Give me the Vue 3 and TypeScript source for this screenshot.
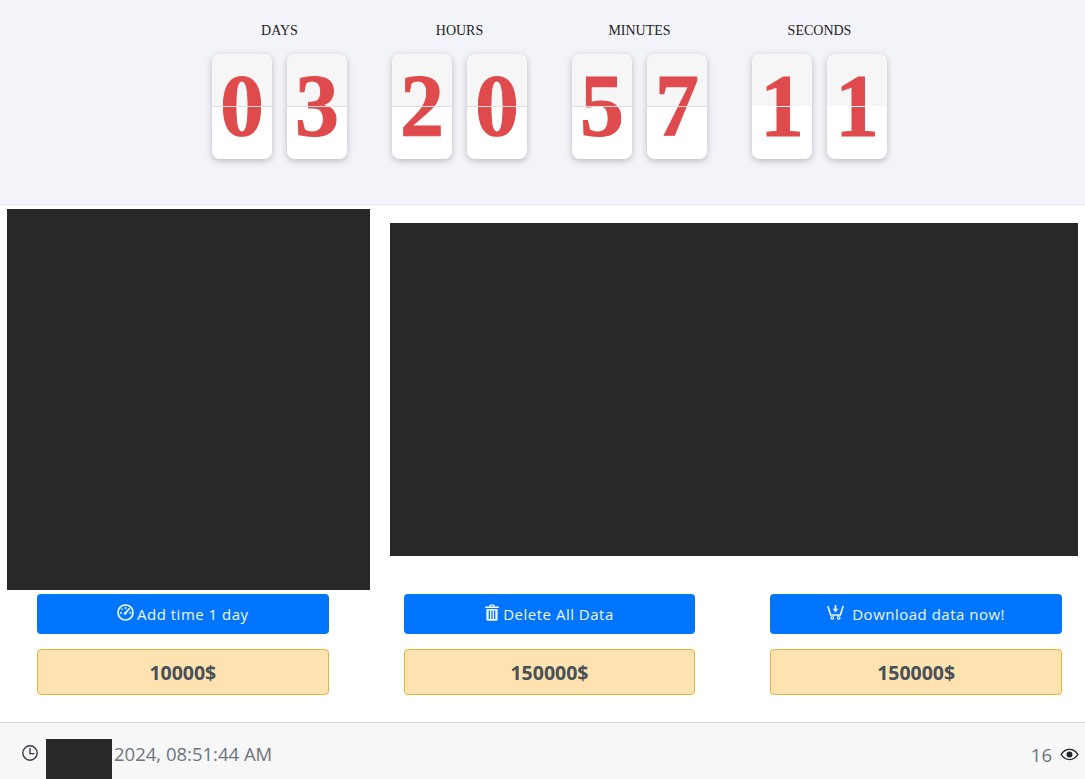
<script setup lang="ts">
interface Unit { label: string; digits: string[]; soft?: boolean }
const units: Unit[] = [
  { label: 'DAYS', digits: ['0', '3'] },
  { label: 'HOURS', digits: ['2', '0'] },
  { label: 'MINUTES', digits: ['5', '7'] },
  { label: 'SECONDS', digits: ['1', '1'], soft: true },
]
const offers = [
  { id: 'time', text: 'Add time 1 day', price: '10000$' },
  { id: 'trash', text: 'Delete All Data', price: '150000$' },
  { id: 'cart', text: 'Download data now!', price: '150000$' },
]
</script>

<template>
  <div class="page">
    <header class="timer">
      <div v-for="u in units" :key="u.label" class="unit">
        <div class="label">{{ u.label }}</div>
        <div class="cards">
          <div v-for="(d, i) in u.digits" :key="i" class="card" :class="{ soft: u.soft }">
            <span class="digit">{{ d }}</span>
          </div>
        </div>
      </div>
    </header>

    <main class="main">
      <div class="media">
        <div class="block left"></div>
        <div class="block right"></div>
      </div>
      <div class="offers">
        <div v-for="o in offers" :key="o.id" class="offer">
          <button class="btn" type="button">
            <svg v-if="o.id === 'time'" class="ico" viewBox="0 0 17 17" fill="none" stroke="currentColor">
              <circle cx="8.500" cy="8.500" r="7.500" stroke-width="1.700" />
              <path stroke-width="1.700" stroke-linecap="round" d="M8.500 3.600v.6M4.900 5v.1M3.600 8.800h.6M13 8.800h.5" />
              <path stroke-width="1.700" stroke-linecap="round" d="M8.300 9.300 12 4.900" />
              <circle cx="8.200" cy="9.400" r="1.400" fill="currentColor" stroke="none" />
            </svg>
            <svg v-else-if="o.id === 'trash'" class="ico trash" viewBox="0 0 14 17" fill="currentColor">
              <path d="M4.300 1.700A1.300 1.300 0 0 1 5.600.5h2.800a1.300 1.300 0 0 1 1.300 1.200V2.600h3.600a.7.7 0 0 1 0 1.500H.7a.7.7 0 0 1 0-1.500h3.600zM5.500 2.600h3V1.700h-3z" fill-rule="evenodd" />
              <path fill-rule="evenodd" d="M1.400 4.900h11.200v10.300a1.500 1.500 0 0 1-1.500 1.500H2.900a1.500 1.500 0 0 1-1.500-1.500V4.900zM3.700 6.600v8.300h1.300V6.600H3.700zm2.650 0v8.300h1.300V6.600H6.350zm2.650 0v8.300h1.300V6.600H9z" />
            </svg>
            <svg v-else class="ico cart" viewBox="0 0 17 15" fill="none" stroke="currentColor">
              <path stroke-width="1.600" stroke-linejoin="round" stroke-linecap="round" d="M1 1.500 3.600 10h9.800L16 1.500" />
              <path stroke-width="1.600" d="M8.500 0v5" />
              <path fill="currentColor" stroke="none" d="M5.700 3.800h5.600L8.500 7.600z" />
              <circle cx="5.300" cy="12.800" r="1.300" stroke-width="1.200" />
              <circle cx="11.700" cy="12.800" r="1.300" stroke-width="1.200" />
            </svg>
            <span class="btn-text" :class="{ wide: o.id === 'cart' }">{{ o.text }}</span>
          </button>
          <div class="price">{{ o.price }}</div>
        </div>
      </div>
    </main>

    <footer class="footer">
      <div class="when">
        <svg class="clock" viewBox="0 0 16 16" fill="none" stroke="currentColor" stroke-width="1.400">
          <circle cx="8" cy="8" r="7.200" />
          <path d="M8 3.500V8.600H12" stroke-linecap="round" />
        </svg>
        <span class="redact"></span>
        <span class="stamp">2024, 08:51:44 AM</span>
      </div>
      <div class="views">
        <span>16</span>
        <svg class="eye" viewBox="0 0 20 14" fill="none" stroke="currentColor">
          <path stroke-width="1.500" d="M1 7c2.300-3.700 5.300-5.500 9-5.500s6.700 1.800 9 5.500c-2.300 3.700-5.300 5.500-9 5.500S3.300 10.700 1 7z" />
          <circle cx="10" cy="7" r="3.200" fill="currentColor" stroke="none" />
        </svg>
      </div>
    </footer>
  </div>
</template>

<style scoped>
.page {
  width: 1085px;
  height: 779px;
  overflow: hidden;
  display: flex;
  flex-direction: column;
  background: #fff;
  font-family: "Open Sans", "Noto Sans", sans-serif;
}
.timer {
  box-sizing: border-box;
  height: 205px;
  display: flex;
  gap: 45px;
  padding: 23px 0 0 212px;
  background: #f3f4f9;
  border-bottom: 1px solid #e2e3e6;
}
.unit { width: 135px; }
.label {
  height: 31px;
  text-align: center;
  font: 14px/16px "Liberation Serif", serif;
  color: #222;
}
.cards { display: flex; gap: 15px; }
.card {
  position: relative;
  width: 60px;
  height: 105px;
  display: flex;
  align-items: center;
  justify-content: center;
  border-radius: 8px;
  background: linear-gradient(#f6f6f7 0, #f6f6f7 50%, #fff 50%, #fff 100%);
  box-shadow: 0 2px 6px rgba(60, 64, 80, 0.32);
}
.card::after {
  content: "";
  position: absolute;
  left: 0;
  right: 0;
  top: 52px;
  height: 1px;
  background: #dedede;
}
.card.soft::after { background: #fff; }
.digit {
  font: 700 88px/103px "Liberation Serif", serif;
  color: #df4a4c;
  -webkit-text-stroke: 1px #df4a4c;
  margin-bottom: 2px;
}
.main { flex: 1; }
.media {
  display: flex;
  gap: 20px;
  align-items: flex-start;
  padding: 4px 7px 0;
}
.block { background: #282828; }
.left { width: 363px; height: 381px; flex: none; }
.right { width: 688px; height: 333px; margin-top: 14px; flex: none; }
.offers {
  display: grid;
  grid-template-columns: repeat(3, 1fr);
  column-gap: 75px;
  padding: 4px 23px 0 37px;
}
.offer { display: flex; flex-direction: column; gap: 15px; }
.btn {
  height: 40px;
  border: 0;
  border-radius: 4px;
  background: #0275fe;
  color: #eef6ff;
  display: flex;
  align-items: center;
  justify-content: center;
  font: 400 15px/20px "Open Sans", "Noto Sans", sans-serif;
  letter-spacing: 0.5px;
  padding: 0;
}
.ico { width: 17px; height: 17px; margin: -4px 3px 0 0; flex: none; }
.ico.trash { width: 14px; height: 17px; margin-right: 4px; }
.ico.cart { width: 17px; height: 15px; margin-right: 8px; }
.price {
  box-sizing: border-box;
  height: 46px;
  padding-top: 1px;
  display: flex;
  align-items: center;
  justify-content: center;
  border: 1px solid #e3b341;
  border-radius: 4px;
  background: #fee3b0;
  color: #495057;
  font-size: 19.500px;
  font-weight: 700;
}
.footer {
  box-sizing: border-box;
  height: 57px;
  display: flex;
  align-items: stretch;
  justify-content: space-between;
  padding: 0 6px 0 22px;
  background: #f7f7f7;
  border-top: 1px solid #d8d8d8;
  color: #6c757d;
  font-size: 18.500px;
}
.when { display: flex; align-items: flex-end; }
.clock { width: 16px; height: 16px; color: #343a40; align-self: flex-start; margin-top: 22px; }
.redact { width: 66px; height: 40px; margin-left: 8px; background: #282828; }
.stamp { margin-left: 2px; line-height: 24px; align-self: flex-start; margin-top: 19px; }
.views { display: flex; align-items: center; gap: 8px; height: 62px; }
.eye { width: 19px; height: 13px; color: #212529; }
</style>
